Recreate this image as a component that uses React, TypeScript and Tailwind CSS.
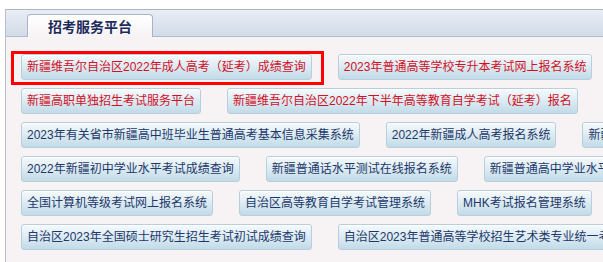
const rows: { text: string; red?: boolean; marked?: boolean }[][] = [
  [
    { text: "新疆维吾尔自治区2022年成人高考（延考）成绩查询", red: true, marked: true },
    { text: "2023年普通高等学校专升本考试网上报名系统", red: true },
  ],
  [
    { text: "新疆高职单独招生考试服务平台", red: true },
    { text: "新疆维吾尔自治区2022年下半年高等教育自学考试（延考）报名", red: true },
  ],
  [
    { text: "2023年有关省市新疆高中班毕业生普通高考基本信息采集系统" },
    { text: "2022年新疆成人高考报名系统" },
    { text: "新疆普通高考网上报名系统" },
  ],
  [
    { text: "2022年新疆初中学业水平考试成绩查询" },
    { text: "新疆普通话水平测试在线报名系统" },
    { text: "新疆普通高中学业水平考试成绩查询" },
  ],
  [
    { text: "全国计算机等级考试网上报名系统" },
    { text: "自治区高等教育自学考试管理系统" },
    { text: "MHK考试报名管理系统" },
  ],
  [
    { text: "自治区2023年全国硕士研究生招生考试初试成绩查询" },
    { text: "自治区2023年普通高等学校招生艺术类专业统一考试成绩查询" },
  ],
];

function LinkButton({ text, red, marked }: { text: string; red?: boolean; marked?: boolean }) {
  return (
    <a
      href="#"
      className={`relative flex h-[26px] shrink-0 items-center whitespace-nowrap rounded-[3px] border border-[#b9cedb] bg-linear-to-b from-[#f5fafd] via-[#dcebf3] to-[#c1dbe8] px-[5px] text-[12px] leading-[14px] shadow-[inset_0_1px_0_#ffffff] ${
        red ? "text-[#d2101f]" : "text-[#1e3869]"
      }`}
    >
      {text}
      {marked ? (
        <span className="pointer-events-none absolute -bottom-[6px] -left-[11px] -right-[13px] -top-[4px] border-[3px] border-[#ff0000]" />
      ) : null}
    </a>
  );
}

export default function App() {
  return (
    <div
      className="h-[262px] w-[603px] overflow-hidden bg-white pl-[5px] pt-[9px]"
      style={{ fontFamily: '"Liberation Sans", "Noto Sans CJK SC", sans-serif' }}
    >
      <div className="w-[760px] border-l border-t border-l-[#b9bdcb] border-t-[#aeb3c2]">
        <div className="flex h-[27px] items-end border-b border-[#b3b9c8] bg-linear-to-b from-[#e9eef6] to-[#d2dbe9] pl-[21px]">
          <div className="-mb-px flex h-[23px] w-[126px] items-center justify-center rounded-t-[4px] border border-b-0 border-[#a9b3c5] bg-linear-to-b from-[#ffffff] to-[#f7f3f5] pt-[2px] text-[14px] font-bold text-[#1c2b5c] shadow-[inset_1px_1px_0_#ffffff]">
            招考服务平台
          </div>
        </div>
        <div className="flex h-[240px] flex-col gap-[8px] bg-[#f7f3f5] pl-[15px] pt-[17px]">
          {rows.map((row, i) => (
            <div key={i} className="flex gap-[26px]">
              {row.map((b) => (
                <LinkButton key={b.text} {...b} />
              ))}
            </div>
          ))}
        </div>
      </div>
    </div>
  );
}
